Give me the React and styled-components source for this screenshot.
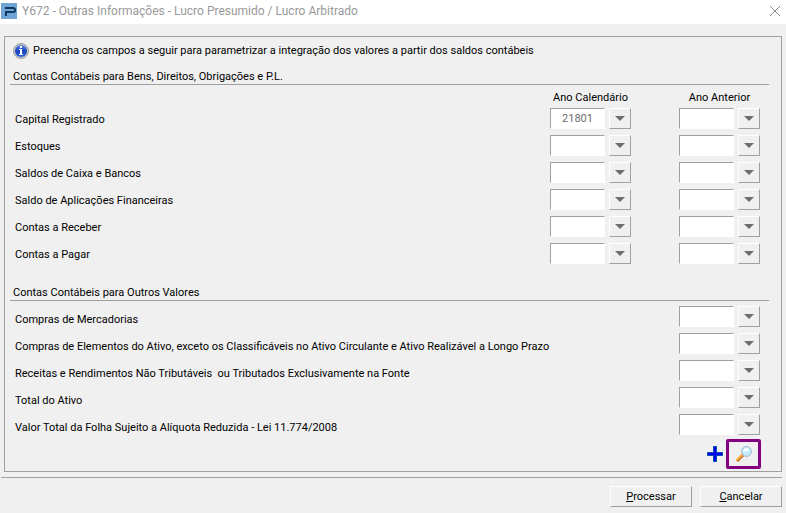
import React, { useState } from "react";
import styled, { createGlobalStyle } from "styled-components";

const GlobalStyle = createGlobalStyle`
  * {
    box-sizing: border-box;
  }

  body {
    margin: 0;
    background: #f0f0f0;
    color: #000;
    font: 11px/16px Roboto, sans-serif;
  }

  button,
  input {
    font: inherit;
    color: inherit;
    border-radius: 0;
  }
`;

const Window = styled.div`
  display: flex;
  flex-direction: column;
  min-height: 100vh;
  background: #f0f0f0;
`;

const TitleBar = styled.header`
  display: flex;
  align-items: center;
  gap: 5px;
  height: 24px;
  padding: 0 5px 2px 1px;
  background: #fff;
`;

const Title = styled.h1`
  flex: 1;
  margin: 0;
  font: 12px/16px Roboto, sans-serif;
  color: #999;
`;

const CloseButton = styled.button`
  display: flex;
  padding: 0;
  border: 0;
  background: none;
`;

const Panel = styled.form`
  margin: 12px 4px 0;
  padding: 6px 12px 2px 5px;
  border: 1px solid #a0a0a0;
`;

const Hint = styled.p`
  display: flex;
  align-items: center;
  gap: 4px;
  height: 16px;
  margin: 0 0 10px;
  padding-left: 3px;
`;

const Section = styled.section`
  margin-bottom: 21px;
`;

const SectionTitle = styled.h2`
  height: 16px;
  margin: 0;
  padding-left: 3px;
  border-bottom: 1px solid #a0a0a0;
  font: inherit;
`;

const Columns = styled.div`
  display: grid;
  grid-template-columns: minmax(0, 1fr) 81px 81px;
  column-gap: 48px;
  padding: 0 9px 0 5px;
`;

const Header = styled(Columns)`
  padding-top: 5px;
  height: 23px;
  text-align: center;
  white-space: nowrap;
`;

const Rows = styled.div`
  display: grid;
  row-gap: 6px;
  padding-top: ${(p) => (p.$spaced ? "5px" : "0")};
`;

const Row = styled(Columns)`
  grid-template-rows: 21px;
`;

const Label = styled.label`
  padding-top: ${(p) => (p.$low ? "6px" : "4px")};
  white-space: pre;
`;

const Field = styled.div`
  display: flex;
  gap: 4px;
  grid-column: ${(p) => p.$column};
`;

const Code = styled.input`
  flex: 1;
  min-width: 0;
  padding: 0;
  border: 1px solid #a0a0a0;
  border-right-color: #fff;
  border-bottom-color: #fff;
  background: #fff;
  color: #6d6d6d;
  text-align: center;
`;

const Raised = styled.button`
  border: 1px solid #fff;
  border-right-color: #a0a0a0;
  border-bottom-color: #a0a0a0;
  background: #f0f0f0;
`;

const Lookup = styled(Raised)`
  display: flex;
  align-items: center;
  justify-content: center;
  width: 22px;
  padding: 0;
`;

const Tools = styled.div`
  display: flex;
  align-items: center;
  justify-content: flex-end;
  gap: 3px;
  margin-top: 4px;
  padding-right: 8px;
`;

const ToolButton = styled.button`
  display: flex;
  align-items: center;
  justify-content: center;
  width: ${(p) => (p.$marked ? "35px" : "16px")};
  height: 30px;
  padding: 0;
  border: ${(p) => (p.$marked ? "3px solid #800080" : "0")};
  border-radius: ${(p) => (p.$marked ? "2px" : "0")};
  background: none;
`;

const Footer = styled.footer`
  display: flex;
  justify-content: flex-end;
  gap: 8px;
  margin: 5px 4px 0 1px;
  padding: 8px 0 5px;
  border-top: 1px solid #a0a0a0;
`;

const Action = styled(Raised)`
  width: 82px;
  height: 21px;
  padding: 0;
`;

const LogoIcon = () => (
  <svg width="16" height="16" viewBox="0 0 16 16" aria-hidden="true">
    <rect width="16" height="16" fill="#6fa5d4" />
    <path
      d="M4 5h8q2 0 2 1.500v1Q14 9 12 9H5v4"
      fill="none"
      stroke="#12375f"
      strokeWidth="2"
    />
  </svg>
);

const CloseIcon = () => (
  <svg width="12" height="12" viewBox="0 0 12 12" aria-hidden="true">
    <path d="M1 1l10 10M11 1L1 11" stroke="#888" fill="none" />
  </svg>
);

const InfoIcon = () => (
  <svg width="16" height="16" viewBox="0 0 16 16" aria-hidden="true">
    <defs>
      <linearGradient id="info" x2="0" y2="1">
        <stop offset="0" stopColor="#5b8be6" />
        <stop offset="0.5" stopColor="#1743bd" />
        <stop offset="1" stopColor="#2c62dc" />
      </linearGradient>
    </defs>
    <circle cx="8" cy="8" r="7.400" fill="#c8c8c8" stroke="#999" />
    <circle cx="8" cy="8" r="6" fill="url(#info)" />
    <path d="M7 3h2v2H7zM6 6h3v5h1v1H6v-1h1V7H6z" fill="#fff" />
  </svg>
);

const ArrowIcon = () => (
  <svg width="10" height="5" viewBox="0 0 10 5" aria-hidden="true">
    <path d="M0 0h10L5 5z" fill="#6d6d6d" />
  </svg>
);

const PlusIcon = () => (
  <svg width="16" height="16" viewBox="0 0 16 16" aria-hidden="true">
    <path
      d="M6.500.5h3v6h6v3h-6v6h-3v-6h-6v-3h6z"
      fill="#0000f0"
      stroke="#0050b0"
    />
  </svg>
);

const SearchIcon = () => (
  <svg width="16" height="16" viewBox="0 0 16 16" aria-hidden="true">
    <path d="M1 15l6-6" stroke="#b96b1e" strokeWidth="3" />
    <path d="M.5 14.500l6-6" stroke="#ffab40" strokeWidth="2" />
    <circle
      cx="10.500"
      cy="5.500"
      r="4.900"
      fill="#c4ecfb"
      stroke="#9fb4d0"
      strokeWidth="1"
    />
    <path d="M7 6Q7.500 2 11.500 2l1.500 2.500Q9 4.500 7 6z" fill="#fff" />
  </svg>
);

const assetRows = [
  { id: "capital", label: "Capital Registrado", current: "21801" },
  { id: "estoques", label: "Estoques" },
  { id: "caixa", label: "Saldos de Caixa e Bancos" },
  { id: "aplicacoes", label: "Saldo de Aplicações Financeiras" },
  { id: "receber", label: "Contas a Receber" },
  { id: "pagar", label: "Contas a Pagar" },
];

const otherRows = [
  { id: "mercadorias", label: "Compras de Mercadorias" },
  {
    id: "elementos",
    label:
      "Compras de Elementos do Ativo, exceto os Classificáveis no Ativo Circulante e Ativo Realizável a Longo Prazo",
  },
  {
    id: "receitas",
    label:
      "Receitas e Rendimentos Não Tributáveis  ou Tributados Exclusivamente na Fonte",
  },
  { id: "total", label: "Total do Ativo" },
  {
    id: "folha",
    label: "Valor Total da Folha Sujeito a Alíquota Reduzida - Lei 11.774/2008",
  },
];

const AccountField = ({ id, column, label, initial = "" }) => {
  const [value, setValue] = useState(initial);

  return (
    <Field $column={column}>
      <Code
        id={id}
        aria-label={label}
        value={value}
        onChange={(event) => setValue(event.target.value)}
      />
      <Lookup type="button" aria-label={`Selecionar ${label}`}>
        <ArrowIcon />
      </Lookup>
    </Field>
  );
};

const App = () => (
  <Window>
    <GlobalStyle />
    <TitleBar>
      <LogoIcon />
      <Title>Y672 - Outras Informações - Lucro Presumido / Lucro Arbitrado</Title>
      <CloseButton type="button" aria-label="Fechar">
        <CloseIcon />
      </CloseButton>
    </TitleBar>

    <Panel id="contas" onSubmit={(event) => event.preventDefault()}>
      <Hint>
        <InfoIcon />
        Preencha os campos a seguir para parametrizar a integração dos valores a
        partir dos saldos contábeis
      </Hint>

      <Section>
        <SectionTitle>
          Contas Contábeis para Bens, Direitos, Obrigações e P.L.
        </SectionTitle>
        <Header>
          <span />
          <span>Ano Calendário</span>
          <span>Ano Anterior</span>
        </Header>
        <Rows>
          {assetRows.map((row) => (
            <Row key={row.id}>
              <Label htmlFor={row.id}>{row.label}</Label>
              <AccountField
                id={row.id}
                column={2}
                label={`${row.label}, Ano Calendário`}
                initial={row.current}
              />
              <AccountField
                id={`${row.id}-anterior`}
                column={3}
                label={`${row.label}, Ano Anterior`}
              />
            </Row>
          ))}
        </Rows>
      </Section>

      <SectionTitle>Contas Contábeis para Outros Valores</SectionTitle>
      <Rows $spaced>
        {otherRows.map((row) => (
          <Row key={row.id}>
            <Label htmlFor={row.id} $low>
              {row.label}
            </Label>
            <AccountField id={row.id} column={3} label={row.label} />
          </Row>
        ))}
      </Rows>

      <Tools>
        <ToolButton type="button" aria-label="Adicionar">
          <PlusIcon />
        </ToolButton>
        <ToolButton type="button" aria-label="Pesquisar" $marked>
          <SearchIcon />
        </ToolButton>
      </Tools>
    </Panel>

    <Footer>
      <Action type="submit" form="contas">
        <u>P</u>rocessar
      </Action>
      <Action type="button">
        <u>C</u>ancelar
      </Action>
    </Footer>
  </Window>
);

export default App;
